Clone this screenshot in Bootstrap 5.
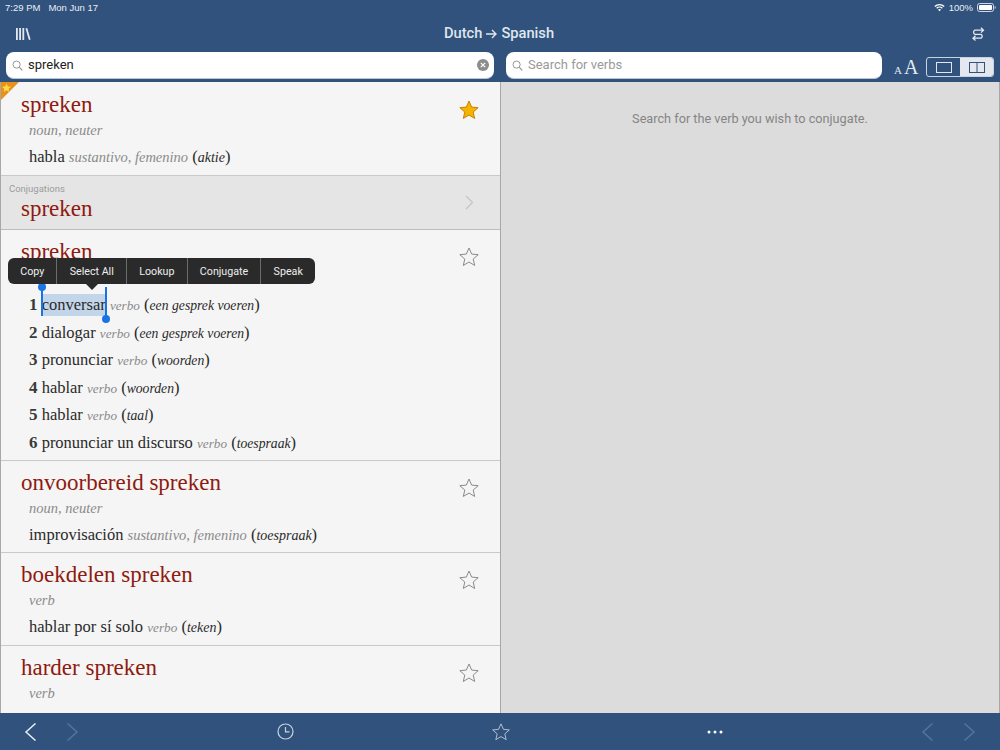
<!DOCTYPE html>
<html lang="en"><head><meta charset="utf-8"><title>Dutch → Spanish</title>
<link rel="stylesheet" href="https://cdn.jsdelivr.net/npm/bootstrap@5.3.0/dist/css/bootstrap.min.css">
<style>
html,body{width:1000px;height:750px;overflow:hidden}
body{font-family:"Liberation Sans",Arial,sans-serif;background:#30527c;color:#fff}
.app-shell{width:1000px;height:750px}
.top-bar{height:82px;background:#30527c;flex:none}
.status-row{height:15px;padding:0 4px 0 5px;font-size:9.5px;line-height:15px;color:#e9eef4}
.title-row{height:37px;padding:0 15px}
.title-text{font-family:"Roboto",sans-serif;font-size:14.7px;font-weight:500;color:#dfe6ee;line-height:37px;gap:4px}
.search-row{height:27px;padding:0 6px}
.search-box{height:27px;flex:none;background:#fff;border-radius:8px;border-bottom:1px solid #b9c6d6;padding:0 5px 0 6px;font-family:"Roboto",sans-serif;font-size:13px}
.left-search{width:488px}
.right-search{width:376px;margin-left:12px}
.query{color:#222;margin-left:5px}
.hint{color:#9a9a9a;margin-left:5px}
.clear-dot{width:12px;height:12px;border-radius:50%;background:#8c8c8c}
.font-size-tool{font-family:"Liberation Serif",serif;color:#e3e8ef;width:31px;margin-left:12px;line-height:1;padding-top:5px;flex:none}
.font-size-tool .small-a{font-size:11px}
.font-size-tool .big-a{font-size:20px;margin-left:2px}
.view-toggle{width:68px;height:20px;flex:none;border:1px solid #c9d3df;border-radius:3px;margin-left:1px;margin-top:5px;overflow:hidden}
.view-toggle>div{width:50%}
.view-on{background:#e4e8ee}
.panes{height:631px}
.left-pane{width:501px;background:#f5f5f5;border-left:1px solid #a8a8a8;border-right:1px solid #a8a8a8;overflow:hidden;position:relative}
.right-pane{width:499px;background:#dcdcdc;color:#858585;font-family:"Roboto",sans-serif;font-size:12.7px;text-align:center;padding-top:29px;line-height:15px;border-right:1px solid #a8a8a8}
.entry{position:relative;border-bottom:1px solid #c9c9c9;padding:8px 0 0 20px;font-family:"Liberation Serif",serif}
.entry-first{height:94px;padding-top:9px}
.entry-senses{height:231px}
.entry-mid{height:92px}
.entry-mid2{height:93px}
.entry-last{height:67px;border-bottom:0}
.entry-head{color:#8f1a10;font-size:23px;line-height:27px}
.entry-pos{color:#8a8a8a;font-style:italic;font-size:14.5px;line-height:17px;margin:4px 0 0 8px}
.entry-sense{color:#2a2a2a;font-size:16.5px;line-height:20px;margin:8px 0 0 8px;white-space:nowrap}
.sense-list{margin:26px 0 0 8px}
.sense-list .entry-sense{margin:0;line-height:27.5px;height:27.5px}
.sense-tag{color:#8a8a8a;font-style:italic;font-size:14.5px;line-height:1}
.sense-short{font-size:13.2px}
.sense-ctx{font-style:italic;font-size:14px;line-height:1}
.sense-list .sense-ctx{font-size:13.7px}
.sense-num{font-weight:700;color:#3a3a3a;font-size:17px;line-height:1}
.star-slot{position:absolute;right:20px;top:16px;line-height:0}
.entry-first .star-slot{top:17px}
.corner-flag{position:absolute;left:0;top:0;line-height:0}
.conj-row{background:#e5e5e5;height:54px;border-bottom:1px solid #bcbcbc;padding:6px 20px 0 8px;position:relative;font-family:"Liberation Serif",serif}
.conj-label{font-family:"Roboto",sans-serif;font-size:9.5px;color:#9c9c9c;line-height:13px}
.conj-word{margin:0 0 0 12px}
.chev-slot{position:absolute;right:26px;top:19px;line-height:0}
.selection{background:#c3d5e8;position:relative;display:inline-block;line-height:22px}
.sel-start,.sel-end{position:absolute;width:2px;background:#1b74e4;top:-7px}
.sel-start{left:-1px;height:29px}
.sel-end{right:-1px;height:30px}
.sel-start::before,.sel-end::after{content:"";position:absolute;left:-3px;width:8px;height:8px;border-radius:50%;background:#1b74e4}
.sel-start::before{top:-4px}
.sel-end::after{bottom:-6px}
.edit-menu{position:absolute;left:7px;top:176px;height:26px;background:#2a2a2a;border-radius:6px;font-family:"Roboto",sans-serif;font-size:10.7px;color:#eee;line-height:27px;z-index:3}
.edit-menu::after{content:"";position:absolute;left:78px;top:26px;border:6px solid transparent;border-top-color:#2a2a2a;border-bottom:0}
.edit-item{padding:0 12.2px;border-left:1px solid #6c6c6c}
.edit-item:first-child{border-left:0}
.bottom-bar{height:37px;background:#30527c;flex:none;position:relative;padding:0 23px}
.bar-group{width:57px}
</style></head>
<body>
<svg width="0" height="0" class="position-absolute"><defs>
<symbol id="star" viewBox="0 0 24 24"><path d="M12 2.200l2.900 6.600 7.100.7-5.400 4.700 1.600 7-6.200-3.700-6.200 3.700 1.600-7L2 9.500l7.100-.7z"/></symbol>
<symbol id="mag" viewBox="0 0 12 12"><circle cx="5" cy="5" r="3.900" fill="none" stroke="#8e8e8e" stroke-width="1"/><path d="M8 8l3.200 3.200" stroke="#8e8e8e" stroke-width="1.200" fill="none"/></symbol>
</defs></svg>
<div class="app-shell d-flex flex-column">
  <div class="top-bar">
    <div class="status-row d-flex justify-content-between">
      <div class="d-flex gap-2"><span>7:29 PM</span><span>Mon Jun 17</span></div>
      <div class="d-flex align-items-center gap-1">
        <svg width="11" height="9" viewBox="0 0 12 9"><path d="M6 8.600L7.600 6.900A2.300 2.300 0 0 0 4.400 6.900zM3.400 5.900A3.700 3.700 0 0 1 8.600 5.900L9.600 4.900A5.100 5.100 0 0 0 2.400 4.900zM1.400 3.900A6.500 6.500 0 0 1 10.600 3.900L11.600 2.900A8 8 0 0 0 .4 2.900z" fill="#fff"/></svg>
        <span>100%</span>
        <svg width="19" height="9" viewBox="0 0 19 9"><rect x=".5" y=".5" width="16" height="8" rx="2" fill="none" stroke="#cfd8e3"/><rect x="2" y="2" width="13" height="5" rx="1" fill="#fff"/><path d="M17.700 3v3c.7-.2 1-.8 1-1.500s-.3-1.300-1-1.500z" fill="#cfd8e3"/></svg>
      </div>
    </div>
    <div class="title-row d-flex justify-content-between align-items-center">
      <svg width="16" height="14" viewBox="0 0 16 14"><g fill="#e3e8ef"><rect x="1" y="1" width="1.800" height="12"/><rect x="4.200" y="1" width="1.800" height="12"/><rect x="7.400" y="1" width="1.800" height="12"/><path d="M10.500 1.500l1.700-.6 3.400 11.600-1.700.6z"/></g></svg>
      <div class="title-text d-flex align-items-center me-1"><span>Dutch</span><svg width="11" height="10" viewBox="0 0 11 10" fill="none" stroke="#dfe6ee" stroke-width="1.400"><path d="M0 5h10M6 1l4 4-4 4"/></svg><span>Spanish</span></div>
      <svg width="14" height="14" viewBox="0 0 14 14" fill="none" stroke="#e3e8ef" stroke-width="1.300"><path d="M10 .8l2.500 2.400L10 5.600M12 3.200H4A2.200 2.200 0 0 0 4 7.300h6A2.200 2.200 0 0 1 10 11.200H2M4.500 8.800L2 11.200l2.500 2.300"/></svg>
    </div>
    <div class="search-row d-flex">
      <div class="search-box left-search d-flex align-items-center">
        <svg width="11" height="11"><use href="#mag"/></svg>
        <span class="query flex-grow-1">spreken</span>
        <span class="clear-dot d-flex align-items-center justify-content-center"><svg width="6" height="6" viewBox="0 0 6 6"><path d="M.8.8l4.400 4.400M5.200.8L.8 5.200" stroke="#fff" stroke-width="1.200"/></svg></span>
      </div>
      <div class="search-box right-search d-flex align-items-center">
        <svg width="11" height="11"><use href="#mag"/></svg>
        <span class="hint">Search for verbs</span>
      </div>
      <div class="font-size-tool text-nowrap"><span class="small-a">A</span><span class="big-a">A</span></div>
      <div class="view-toggle d-flex">
        <div class="d-flex align-items-center justify-content-center"><svg width="16" height="11"><rect x=".5" y=".5" width="15" height="10" fill="none" stroke="#dfe6ee"/></svg></div>
        <div class="view-on d-flex align-items-center justify-content-center"><svg width="16" height="11"><rect x=".5" y=".5" width="15" height="10" fill="none" stroke="#30527c"/><path d="M8 .5v10" stroke="#30527c"/></svg></div>
      </div>
    </div>
  </div>
  <div class="panes d-flex">
    <div class="left-pane">
      <div class="entry entry-first">
        <div class="corner-flag"><svg width="18" height="18" viewBox="0 0 18 18"><path d="M0 0h18L0 18z" fill="#e8921a"/><path d="M5.500 1.500l1.300 3 3.200.3-2.400 2.100.7 3.100-2.800-1.700L2.700 10l.7-3.100L1 4.800l3.200-.3z" fill="#ffd94a"/></svg></div>
        <div class="entry-head">spreken</div>
        <div class="entry-pos">noun, neuter</div>
        <div class="entry-sense">habla <span class="sense-tag">sustantivo, femenino</span> (<span class="sense-ctx">aktie</span>)</div>
        <div class="star-slot"><svg width="22" height="22"><use href="#star" fill="#f5b400" stroke="#c27c00"/></svg></div>
      </div>
      <div class="conj-row">
        <div class="conj-label">Conjugations</div>
        <div class="entry-head conj-word">spreken</div>
        <div class="chev-slot"><svg width="9" height="15" viewBox="0 0 9 15"><path d="M1 1l6.500 6.500L1 14" fill="none" stroke="#c4c4c4" stroke-width="1.200"/></svg></div>
      </div>
      <div class="entry entry-senses">
        <div class="entry-head">spreken</div>
        <div class="sense-list">
          <div class="entry-sense"><span class="sense-num">1</span> <span class="selection">conversar<i class="sel-start"></i><i class="sel-end"></i></span> <span class="sense-tag sense-short">verbo</span> (<span class="sense-ctx">een gesprek voeren</span>)</div>
          <div class="entry-sense"><span class="sense-num">2</span> dialogar <span class="sense-tag sense-short">verbo</span> (<span class="sense-ctx">een gesprek voeren</span>)</div>
          <div class="entry-sense"><span class="sense-num">3</span> pronunciar <span class="sense-tag sense-short">verbo</span> (<span class="sense-ctx">woorden</span>)</div>
          <div class="entry-sense"><span class="sense-num">4</span> hablar <span class="sense-tag sense-short">verbo</span> (<span class="sense-ctx">woorden</span>)</div>
          <div class="entry-sense"><span class="sense-num">5</span> hablar <span class="sense-tag sense-short">verbo</span> (<span class="sense-ctx">taal</span>)</div>
          <div class="entry-sense"><span class="sense-num">6</span> pronunciar un discurso <span class="sense-tag sense-short">verbo</span> (<span class="sense-ctx">toespraak</span>)</div>
        </div>
        <div class="star-slot"><svg width="22" height="22"><use href="#star" fill="none" stroke="#808080"/></svg></div>
      </div>
      <div class="entry entry-mid">
        <div class="entry-head">onvoorbereid spreken</div>
        <div class="entry-pos">noun, neuter</div>
        <div class="entry-sense">improvisación <span class="sense-tag">sustantivo, femenino</span> (<span class="sense-ctx">toespraak</span>)</div>
        <div class="star-slot"><svg width="22" height="22"><use href="#star" fill="none" stroke="#808080"/></svg></div>
      </div>
      <div class="entry entry-mid2">
        <div class="entry-head">boekdelen spreken</div>
        <div class="entry-pos">verb</div>
        <div class="entry-sense">hablar por sí solo <span class="sense-tag sense-short">verbo</span> (<span class="sense-ctx">teken</span>)</div>
        <div class="star-slot"><svg width="22" height="22"><use href="#star" fill="none" stroke="#808080"/></svg></div>
      </div>
      <div class="entry entry-last">
        <div class="entry-head">harder spreken</div>
        <div class="entry-pos">verb</div>
        <div class="star-slot"><svg width="22" height="22"><use href="#star" fill="none" stroke="#808080"/></svg></div>
      </div>
      <div class="edit-menu d-flex">
        <div class="edit-item">Copy</div><div class="edit-item">Select All</div><div class="edit-item">Lookup</div><div class="edit-item">Conjugate</div><div class="edit-item">Speak</div>
      </div>
    </div>
    <div class="right-pane">Search for the verb you wish to conjugate.</div>
  </div>
  <div class="bottom-bar d-flex align-items-center justify-content-between">
    <div class="bar-group d-flex justify-content-between">
      <svg width="16" height="18" viewBox="0 0 16 18"><path d="M12.500 .5L3 9l9.500 8.500" fill="none" stroke="#e8edf3" stroke-width="1.500"/></svg>
      <svg width="16" height="18" viewBox="0 0 16 18"><path d="M3.500 .5L13 9l-9.500 8.500" fill="none" stroke="#56749a" stroke-width="1.500"/></svg>
    </div>
    <svg width="17" height="17" viewBox="0 0 17 17" fill="none" stroke="#c9d3df" stroke-width="1.200"><circle cx="8.500" cy="8.500" r="7.500"/><path d="M8.500 4v4.800h4"/></svg>
    <svg width="20" height="20" viewBox="0 0 24 24"><use href="#star" fill="none" stroke="#c9d3df"/></svg>
    <svg width="16" height="4" viewBox="0 0 16 4"><circle cx="2" cy="2" r="1.500" fill="#fff"/><circle cx="8" cy="2" r="1.500" fill="#fff"/><circle cx="14" cy="2" r="1.500" fill="#fff"/></svg>
    <div class="bar-group d-flex justify-content-between">
      <svg width="16" height="18" viewBox="0 0 16 18"><path d="M12.500 .5L3 9l9.500 8.500" fill="none" stroke="#56749a" stroke-width="1.500"/></svg>
      <svg width="16" height="18" viewBox="0 0 16 18"><path d="M3.500 .5L13 9l-9.500 8.500" fill="none" stroke="#56749a" stroke-width="1.500"/></svg>
    </div>
  </div>
</div>
<script src="https://cdn.jsdelivr.net/npm/bootstrap@5.3.0/dist/js/bootstrap.bundle.min.js"></script>
</body></html>
